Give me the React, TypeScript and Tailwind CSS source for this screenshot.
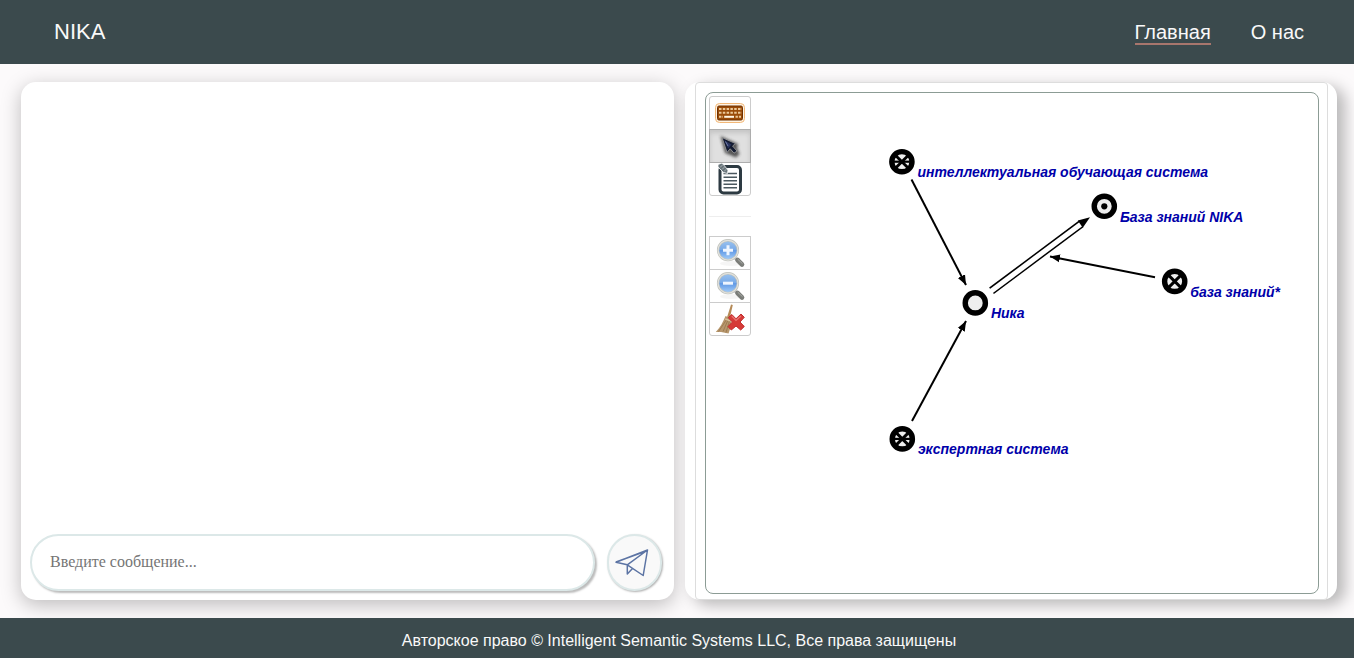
import type { ReactNode } from 'react';

const RIM = 10.1;

type NodeKind = 'plain' | 'tuple' | 'cross' | 'star';

const nodes: { x: number; y: number; label: string; kind: NodeKind }[] = [
  { x: 195.9, y: 68.7, label: 'интеллектуальная обучающая система', kind: 'star' },
  { x: 398.3, y: 113.3, label: 'База знаний NIKA', kind: 'tuple' },
  { x: 468.7, y: 188.4, label: 'база знаний*', kind: 'cross' },
  { x: 269.3, y: 209.9, label: 'Ника', kind: 'plain' },
  { x: 196.3, y: 345.9, label: 'экспертная система', kind: 'star' },
];

function NodeMark({ kind }: { kind: NodeKind }) {
  if (kind === 'plain') return null;
  if (kind === 'tuple') return <circle r="3.1" fill="#000" />;
  return (
    <g stroke="#000" strokeWidth="2.9">
      <path d="M-6-6L6 6M6-6L-6 6" />
      {kind === 'star' && <path d="M-8 0H8" strokeWidth="2.2" />}
    </g>
  );
}

function Graph() {
  return (
    <svg className="block h-full w-full" viewBox="0 0 612 500">
      <defs>
        <marker id="tip" markerUnits="userSpaceOnUse" markerWidth="12" markerHeight="10" refX="10" refY="4.5" orient="auto">
          <path d="M0 0.5L10 4.5L0 8.5Z" fill="#000" />
        </marker>
      </defs>
      <g stroke="#000" strokeWidth="2" fill="none">
        <path d="M205.5 86.5L260 192" markerEnd="url(#tip)" />
        <path d="M206 328L260 228" markerEnd="url(#tip)" />
        <path d="M449 184.2L344 163.5" markerEnd="url(#tip)" />
      </g>
      <path d="M285.5 197.8L375 131" stroke="#000" strokeWidth="8" />
      <path d="M284.7 198.4L375.8 130.4" stroke="#fff" strokeWidth="5" />
      <path d="M384 124.2L376.8 134.8L371.8 127.6Z" fill="#000" />
      {nodes.map((n) => (
        <g key={n.label} transform={`translate(${n.x} ${n.y})`}>
          <circle r={RIM} fill="#eee" stroke="#000" strokeWidth="5.4" />
          <NodeMark kind={n.kind} />
          <text
            x="15.6"
            y="15.4"
            className="fill-[#0000aa] font-['Liberation_Sans',Arial,sans-serif] text-[14px] font-bold italic"
          >
            {n.label}
          </text>
        </g>
      ))}
    </svg>
  );
}

function KeyboardIcon() {
  return (
    <svg width="32" height="32" viewBox="0 0 32 32">
      <rect x="1.5" y="6.5" width="29" height="19" rx="4" fill="#fff4e4" stroke="#f2b777" />
      <rect x="3.5" y="9" width="25" height="14" rx="1.5" fill="#9a4b08" stroke="#6f3000" />
      <g stroke="#ecc999" strokeWidth="2">
        <path d="M5 12H28M5 15.7H28" strokeDasharray="2.5 1.3" />
        <path d="M5 19.8H9M21.5 19.8H27" strokeDasharray="2.4 1" />
        <path d="M10.2 19.8H20" stroke="#fff6e5" />
      </g>
    </svg>
  );
}

function PointerIcon() {
  return (
    <svg width="32" height="32" viewBox="0 0 32 32">
      <defs>
        <filter id="soft" x="-50%" y="-50%" width="200%" height="200%">
          <feGaussianBlur stdDeviation="1.8" />
        </filter>
      </defs>
      <path d="M6.5 6L24 14L23 18L25.5 24L22 27.5L16 25L11 23Z" fill="#333" opacity=".8" filter="url(#soft)" />
      <path d="M8 7.5L21.5 13.5L18.6 16L23 21L20 23.2L16.2 18.8L13 22.5Z" fill="#141c32" stroke="#999" strokeWidth=".9" />
      <path d="M10.5 10.5L17.5 14.5L14.2 18.5Z" fill="#28335f" />
      <path d="M11.5 11.5L14 16" stroke="#6f7ba8" strokeWidth="1" />
    </svg>
  );
}

function NotesIcon() {
  return (
    <svg width="32" height="32" viewBox="0 0 32 32">
      <rect x="6" y="3.5" width="20.5" height="26.5" rx="3.5" fill="#fff" stroke="#2d3a42" strokeWidth="3" />
      <path d="M9.5 10.5H23M9.5 14.2H23M9.5 17.8H23M9.5 21.3H23M9.5 24.8H23" stroke="#4b585f" strokeWidth="1.4" />
      <path d="M4 1.5L8 0L14 7L13.5 10.5L9.5 9.5L4 4Z" fill="#68747a" stroke="#fff" strokeWidth=".8" />
      <path d="M6 4.5L9 1.5M8 6.5L11 3.5M10 8.5L13 5.5" stroke="#b9c0c2" strokeWidth=".8" />
    </svg>
  );
}

function ZoomIcon({ plus = false }: { plus?: boolean }) {
  return (
    <svg width="32" height="32" viewBox="0 0 32 32">
      <defs>
        <linearGradient id="lens" x1="0" y1="0" x2="0" y2="1">
          <stop stopColor="#9cc3ee" />
          <stop offset=".48" stopColor="#78aae8" />
          <stop offset=".52" stopColor="#6199e5" />
          <stop offset="1" stopColor="#a7d0fa" />
        </linearGradient>
      </defs>
      <ellipse cx="17" cy="26.5" rx="11" ry="2.5" fill="#000" opacity=".04" />
      <path d="M20.5 20.5L23.5 23.5" stroke="#bbb" strokeWidth="3" />
      <path d="M23.5 23L28 27.5" stroke="#7b7d79" strokeWidth="4.6" strokeLinecap="round" />
      <path d="M23.7 22.2L28.5 26.7" stroke="#aaaca7" strokeWidth="1" />
      <circle cx="14" cy="13.2" r="9.9" fill="url(#lens)" stroke="#c0c2bc" strokeWidth="2.4" />
      <circle cx="14" cy="13.2" r="9.9" fill="none" stroke="#e1e2de" strokeWidth="1.2" />
      <path d={plus ? 'M9 13.2H19M14 8.2V18.2' : 'M9 13.2H19'} stroke="#eef5ff" strokeWidth="3" />
    </svg>
  );
}

function CleanIcon() {
  return (
    <svg width="32" height="32" viewBox="0 0 32 32">
      <path d="M17 1.5L18.8 2L15.8 15L13 14.5Z" fill="#b58a57" />
      <path d="M11.5 13L17 15.5C18 21 16 26.5 14.5 30.5L7 29L1.8 29C6.5 24 9 19 11.5 13Z" fill="#b7976d" />
      <path d="M13 16L4.5 28.5M14 17L9 28.5M15.5 18L12 29.5" stroke="#9d7b52" strokeWidth="1" />
      <path d="M11.3 16L17 18.2" stroke="#d8c19d" strokeWidth="1.4" />
      <path d="M17.8 11.5L22 15.8L27 11L30.3 14.3L26 19L30.3 23.5L26.7 27L22 23L17.3 27L14 23.6L18.4 19L14.3 14.7Z" fill="#d63b38" stroke="#c22d2d" strokeWidth="1" strokeLinejoin="round" />
      <path d="M17.8 13.2L22 17.5L27 13" fill="none" stroke="#ea7975" strokeWidth="1.2" />
    </svg>
  );
}

function Tool({ label, selected = false, className = '', children }: { label: string; selected?: boolean; className?: string; children: ReactNode }) {
  return (
    <button
      aria-label={label}
      className={`flex w-[42px] items-center justify-center border ${
        selected ? 'relative border-[#adadad] bg-[#e0e0e0] shadow-[inset_0_3px_5px_rgba(0,0,0,0.125)]' : 'border-[#ccc] bg-white'
      } ${className}`}
    >
      {children}
    </button>
  );
}

function PlaneIcon() {
  return (
    <svg width="34" height="30" viewBox="0 0 34 30" fill="none" stroke="#5c74a4" strokeWidth="1.5" strokeLinejoin="round">
      <path d="M32.5 2L1 14.3L12.3 16.8L28.2 27.5L32.5 2L12.3 16.8V26L17.5 20.5M1 14L32 2.8" />
    </svg>
  );
}

export default function App() {
  return (
    <div className="flex h-[658px] w-[1354px] flex-col overflow-hidden bg-[#fcfafb] font-['Liberation_Sans',Arial,sans-serif]">
      <header className="flex h-16 shrink-0 items-center justify-between bg-[#3b4a4d] pl-[54px] pr-[50px] text-[#f9f9f9]">
        <span className="text-[22px] leading-none">NIKA</span>
        <nav className="flex gap-10 text-[20px] leading-[21px]">
          <a className="mt-0.5 border-b-2 border-[#a8766d] pt-px">Главная</a>
          <a className="mt-0.5 border-b-2 border-transparent pt-px">О нас</a>
        </nav>
      </header>

      <main className="flex h-[554px] shrink-0 gap-[11px] overflow-hidden pb-[18px] pl-[21px] pt-[18px]">
        <section className="flex w-[653px] flex-col justify-end rounded-[15px] bg-white pb-[9px] pl-[9px] shadow-[0_5px_20px_rgba(0,0,0,0.25)]">
          <form className="flex gap-3">
            <input
              placeholder="Введите сообщение..."
              className="h-[57px] w-[565px] rounded-[29px] border-2 border-[#dce8e8] bg-white px-[18px] pb-px font-['Liberation_Serif',serif] text-[16px] shadow-[2px_2px_2px_#bcbcbc] outline-none placeholder:text-[#757575]"
            />
            <button aria-label="Отправить" type="button" className="flex h-[57px] w-[55px] items-center justify-center rounded-full border-2 border-[#dce8e8] bg-[#f9f9f9] pr-[6px] shadow-[1px_1px_2px_#b0b0b0]">
              <PlaneIcon />
            </button>
          </form>
        </section>

        <section className="w-[652px] overflow-visible rounded-[15px] bg-white pl-[10px] shadow-[8px_5px_15px_rgba(0,0,0,0.27)]">
          <div className="h-[518px] w-[633px] rounded-[4px] border border-[#ddd] p-[9px]">
            <div className="relative h-[502px] w-[614px] rounded-[8px] border border-[#8c9c95] bg-white">
              <Graph />
              <div className="absolute left-[3px] top-[3px] flex w-[42px] flex-col">
                <Tool label="Клавиатура" className="h-[34px] rounded-t-[3px]"><KeyboardIcon /></Tool>
                <Tool label="Выбор" selected className="-mt-px h-[34px]"><PointerIcon /></Tool>
                <Tool label="Контур" className="-mt-px h-[34px] rounded-b-[3px]"><NotesIcon /></Tool>
                <hr className="my-5 border-[#eee]" />
                <Tool label="Увеличить" className="-mt-px h-[34px]"><ZoomIcon plus /></Tool>
                <Tool label="Уменьшить" className="-mt-px h-[34px]"><ZoomIcon /></Tool>
                <Tool label="Очистить" className="-mt-px h-[34px] rounded-b-[3px]"><CleanIcon /></Tool>
              </div>
            </div>
          </div>
        </section>
      </main>

      <footer className="flex h-10 shrink-0 items-center justify-center bg-[#3b4a4d] pl-1 pt-1.5 text-[16px] text-[#f9f9f9]">
        Авторское право © Intelligent Semantic Systems LLC, Все права защищены
      </footer>
    </div>
  );
}
